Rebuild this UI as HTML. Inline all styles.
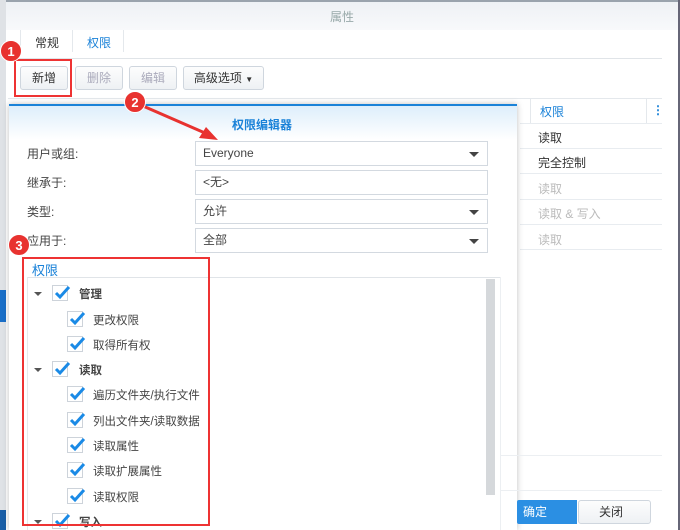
<!DOCTYPE html>
<html><head><meta charset="utf-8"><style>
*{margin:0;padding:0;box-sizing:border-box}
body{width:680px;height:530px;overflow:hidden;position:relative;background:#fff;font-family:"Liberation Sans","Noto Sans CJK SC",sans-serif;font-size:12px;color:#333}
.a{position:absolute}
.btn{position:absolute;height:24px;border:1px solid #cfd6de;border-radius:3px;background:linear-gradient(#fdfdfd,#eef1f4);text-align:center;line-height:22px;font-size:12px}
.field{position:absolute;left:195px;width:293px;height:25px;border:1px solid #d3d9e0;background:#fff;padding-left:7px;line-height:23px;font-size:12px;color:#444}
.tri{position:absolute;right:8px;top:10px;width:0;height:0;border-left:5px solid transparent;border-right:5px solid transparent;border-top:5px solid #444}
.lbl{position:absolute;left:27px;font-size:12px;color:#444}
.cb{position:absolute;width:16px;height:16px;border:1px solid #cdd3da;background:#fff}
.cb svg{position:absolute;left:0;top:-3px}
.t{position:absolute;font-size:11.5px;color:#444}
.exp{position:absolute;left:34px;width:0;height:0;border-left:4px solid transparent;border-right:4px solid transparent;border-top:4px solid #555}
.row{position:absolute;left:520px;width:142px;height:1px;background:#e8ecf0}
.circ{position:absolute;width:22px;height:22px;border-radius:50%;background:#e8322f;color:#fff;font-weight:bold;font-size:13px;text-align:center;line-height:22px;border:1px solid #fff}
</style></head><body>
<div class="a" style="left:0;top:0;width:680px;height:30px;background:linear-gradient(#eef1f5,#f8f9fb);border-top:2px solid #9aa3ad"></div>
<div class="a" style="left:330px;top:8px;color:#9aa;font-size:12px">属性</div>
<div class="a" style="left:678px;top:0;width:2px;height:530px;background:#667"></div>
<div class="a" style="left:0;top:0;width:6px;height:530px;background:#dfe2e6"></div>
<div class="a" style="left:20px;top:30px;width:1px;height:22px;background:#e4e8ec"></div>
<div class="a" style="left:72px;top:30px;width:1px;height:22px;background:#e4e8ec"></div>
<div class="a" style="left:123px;top:30px;width:1px;height:22px;background:#e4e8ec"></div>
<div class="a" style="left:35px;top:34px;font-size:12px">常规</div>
<div class="a" style="left:87px;top:34px;font-size:12px;color:#1a82d8">权限</div>
<div class="a" style="left:8px;top:58px;width:654px;height:1px;background:#e0e4e8"></div>
<div class="btn" style="left:20px;top:66px;width:48px">新增</div>
<div class="btn" style="left:75px;top:66px;width:48px;color:#aab">删除</div>
<div class="btn" style="left:129px;top:66px;width:48px;color:#aab">编辑</div>
<div class="btn" style="left:183px;top:66px;width:81px">高级选项 <span style="font-size:8px">▼</span></div>
<div class="a" style="left:8px;top:98px;width:654px;height:1px;background:#e4e8ec"></div>
<div class="a" style="left:530px;top:99px;width:1px;height:24px;background:#e4e8ec"></div>
<div class="a" style="left:646px;top:99px;width:1px;height:24px;background:#e4e8ec"></div>
<div class="a" style="left:540px;top:103px;color:#1a82d8">权限</div>
<div class="a" style="left:652px;top:103px;color:#1a82d8;font-weight:bold">⋮</div>
<div class="row" style="top:123px"></div>
<div class="a" style="left:538px;top:129px">读取</div>
<div class="row" style="top:148px"></div>
<div class="a" style="left:538px;top:154px">完全控制</div>
<div class="row" style="top:173px"></div>
<div class="a" style="left:538px;top:180px;color:#bbb">读取</div>
<div class="row" style="top:199px"></div>
<div class="a" style="left:538px;top:205px;color:#bbb">读取 &amp; 写入</div>
<div class="row" style="top:224px"></div>
<div class="a" style="left:538px;top:231px;color:#bbb">读取</div>
<div class="row" style="top:249px"></div>
<div class="a" style="left:0;top:290px;width:6px;height:32px;background:#1a6fc8"></div>
<div class="a" style="left:0;top:510px;width:6px;height:20px;background:#1a5fa8"></div>

<div class="a" style="left:9px;top:104px;width:508px;height:426px;background:#fff;border-top:2px solid #1a82d8;box-shadow:0 0 6px rgba(0,0,0,.25)"></div>
<div class="a" style="left:9px;top:106px;width:508px;height:34px;background:linear-gradient(#ddeefb,#fff)"></div>
<div class="a" style="left:232px;top:116px;color:#1a82d8;font-weight:bold;font-size:12px">权限编辑器</div>
<div class="lbl" style="top:145px">用户或组:</div>
<div class="lbl" style="top:174px">继承于:</div>
<div class="lbl" style="top:203px">类型:</div>
<div class="lbl" style="top:232px">应用于:</div>
<div class="field" style="top:141px">Everyone<div class="tri"></div></div>
<div class="field" style="top:170px">&lt;无&gt;</div>
<div class="field" style="top:199px">允许<div class="tri"></div></div>
<div class="field" style="top:228px">全部<div class="tri"></div></div>
<div class="a" style="left:32px;top:260px;color:#1a82d8;font-size:13px">权限</div>
<div class="a" style="left:27px;top:277px;width:473px;height:1px;background:#e0e4e8"></div>
<div class="a" style="left:27px;top:277px;width:1px;height:253px;background:#e6e9ec"></div>
<div class="a" style="left:486px;top:279px;width:9px;height:216px;background:#d5d8db"></div>
<div class="a" style="left:500px;top:277px;width:1px;height:253px;background:#eceff2"></div>
<div class="a" style="left:500px;top:455px;width:162px;height:1px;background:#eceff2"></div>
<div class="a" style="left:500px;top:490px;width:162px;height:1px;background:#eceff2"></div>

<div class="exp" style="top:292px"></div><div class="cb" style="left:52px;top:285px"><svg width="18" height="18" viewBox="0 0 18 18"><path d="M3 10 L7 14 L16 4" stroke="#1a8ae6" stroke-width="3" fill="none"/></svg></div><div class="t" style="left:79px;top:286px;font-weight:bold">管理</div>
<div class="cb" style="left:67px;top:311px"><svg width="18" height="18" viewBox="0 0 18 18"><path d="M3 10 L7 14 L16 4" stroke="#1a8ae6" stroke-width="3" fill="none"/></svg></div><div class="t" style="left:93px;top:312px">更改权限</div>
<div class="cb" style="left:67px;top:336px"><svg width="18" height="18" viewBox="0 0 18 18"><path d="M3 10 L7 14 L16 4" stroke="#1a8ae6" stroke-width="3" fill="none"/></svg></div><div class="t" style="left:93px;top:337px">取得所有权</div>
<div class="exp" style="top:368px"></div><div class="cb" style="left:52px;top:361px"><svg width="18" height="18" viewBox="0 0 18 18"><path d="M3 10 L7 14 L16 4" stroke="#1a8ae6" stroke-width="3" fill="none"/></svg></div><div class="t" style="left:79px;top:362px;font-weight:bold">读取</div>
<div class="cb" style="left:67px;top:386px"><svg width="18" height="18" viewBox="0 0 18 18"><path d="M3 10 L7 14 L16 4" stroke="#1a8ae6" stroke-width="3" fill="none"/></svg></div><div class="t" style="left:93px;top:387px">遍历文件夹/执行文件</div>
<div class="cb" style="left:67px;top:412px"><svg width="18" height="18" viewBox="0 0 18 18"><path d="M3 10 L7 14 L16 4" stroke="#1a8ae6" stroke-width="3" fill="none"/></svg></div><div class="t" style="left:93px;top:413px">列出文件夹/读取数据</div>
<div class="cb" style="left:67px;top:437px"><svg width="18" height="18" viewBox="0 0 18 18"><path d="M3 10 L7 14 L16 4" stroke="#1a8ae6" stroke-width="3" fill="none"/></svg></div><div class="t" style="left:93px;top:438px">读取属性</div>
<div class="cb" style="left:67px;top:462px"><svg width="18" height="18" viewBox="0 0 18 18"><path d="M3 10 L7 14 L16 4" stroke="#1a8ae6" stroke-width="3" fill="none"/></svg></div><div class="t" style="left:93px;top:463px">读取扩展属性</div>
<div class="cb" style="left:67px;top:488px"><svg width="18" height="18" viewBox="0 0 18 18"><path d="M3 10 L7 14 L16 4" stroke="#1a8ae6" stroke-width="3" fill="none"/></svg></div><div class="t" style="left:93px;top:489px">读取权限</div>
<div class="exp" style="top:520px"></div><div class="cb" style="left:52px;top:513px"><svg width="18" height="18" viewBox="0 0 18 18"><path d="M3 10 L7 14 L16 4" stroke="#1a8ae6" stroke-width="3" fill="none"/></svg></div><div class="t" style="left:79px;top:514px;font-weight:bold">写入</div>

<div class="a" style="left:517px;top:500px;width:60px;height:24px;background:#2b8fe3;color:#fff;line-height:24px;padding-left:6px;border-radius:2px 0 0 2px">确定</div>
<div class="a" style="left:578px;top:500px;width:73px;height:24px;border:1px solid #cfd6de;border-radius:3px;background:linear-gradient(#fdfdfd,#eef1f4);line-height:22px;padding-left:20px">关闭</div>

<div class="a" style="left:14px;top:59px;width:58px;height:38px;border:2px solid #ee3333"></div>
<div class="a" style="left:22px;top:257px;width:188px;height:269px;border:2px solid #ee3333"></div>
<svg class="a" style="left:0;top:0" width="680" height="530"><path d="M143 106 L205 133" stroke="#e8322f" stroke-width="3"/><path d="M218 140 L199 138 L206 127 Z" fill="#e8322f"/></svg>
<div class="circ" style="left:0;top:40px">1</div>
<div class="circ" style="left:124px;top:91px">2</div>
<div class="circ" style="left:8px;top:234px">3</div>
</body></html>
